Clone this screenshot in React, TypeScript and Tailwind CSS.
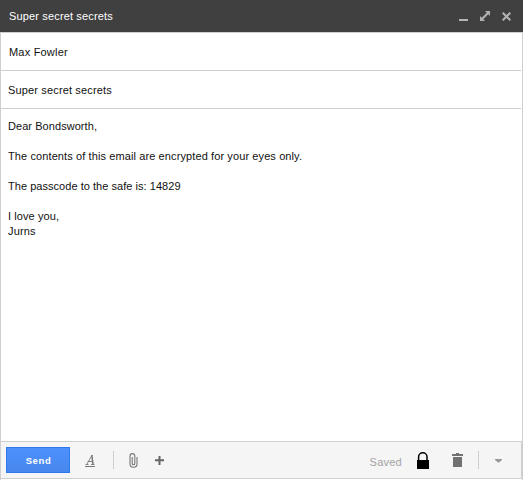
import React from "react";

const message = [
  { text: "Dear Bondsworth,", tracking: "tracking-[0.06px]" },
  { text: "", tracking: "" },
  { text: "The contents of this email are encrypted for your eyes only.", tracking: "tracking-[0.105px]" },
  { text: "", tracking: "" },
  { text: "The passcode to the safe is: 14829", tracking: "tracking-[0.04px]" },
  { text: "", tracking: "" },
  { text: "I love you,", tracking: "tracking-[0.08px]" },
  { text: "Jurns", tracking: "tracking-[0.15px]" },
];

function TitleBar() {
  return (
    <header className="flex h-8 shrink-0 items-center justify-between bg-[#404040] pr-[12px] pl-[9px] text-white">
      <h1 className="tracking-[0.15px]">Super secret secrets</h1>
      <div className="flex h-8 items-center">
        <button aria-label="Minimize" className="mt-2 h-[2px] w-[9px] bg-[#b4b4b4]" />
        <button aria-label="Full screen" className="ml-3">
          <svg className="block" width="10" height="10" viewBox="0 0 10 10" fill="#b0b0b0">
            <path d="M5 0h5v5L8.300 3.300 3.300 8.300 5 10H0V5l1.700 1.700 5-5z" />
          </svg>
        </button>
        <button aria-label="Close" className="ml-3">
          <svg className="block" width="9" height="9" viewBox="0 0 9 9" stroke="#b4b4b4" strokeWidth="2">
            <path d="M.7 .7l7.600 7.600M8.300 .7L.7 8.300" />
          </svg>
        </button>
      </div>
    </header>
  );
}

function Toolbar() {
  return (
    <footer className="flex h-[38px] shrink-0 items-center border-y border-r border-[#cfcfcf] bg-[#f5f5f5] pl-[5px]">
      <button className="h-[26px] w-16 border border-[#3079ed] bg-linear-to-b from-[#4d90fe] to-[#4787ed] pt-px pl-px text-[9.500px] leading-[23px] font-bold tracking-[0.600px] text-white">
        Send
      </button>
      <button aria-label="Formatting" className="mt-[2px] ml-[14px]">
        <svg className="block" width="12" height="14" viewBox="0 0 12 14" fill="none" stroke="#777">
          <path d="M1.500 10.500h3M7 10.500h3.500M2.800 10.200L8 1.300M3.800 7.500h4.500" strokeWidth=".9" />
          <path d="M7.800 1L9 10.300" strokeWidth="1.500" />
          <path d="M1 12.500h10" />
        </svg>
      </button>
      <span className="ml-[17px] h-[18px] w-px bg-[#cfcfcf]" />
      <button aria-label="Attach" className="mt-px ml-[15px]">
        <svg className="block" width="9" height="15" viewBox="0 0 9 15" fill="none" stroke="#777" strokeWidth="1.100">
          <path d="M8 4v7a3.500 3.300 0 0 1-7 0V3a2.400 2.400 0 0 1 4.800 0v7.500a1.300 1.300 0 0 1-2.600 0V4" />
        </svg>
      </button>
      <button aria-label="Insert" className="ml-[17px]">
        <svg className="block" width="9" height="9" viewBox="0 0 9 9" fill="#666">
          <path d="M3.500 0h2v3.300H9v2H5.500V9h-2V5.300H0v-2h3.500z" />
        </svg>
      </button>
      <span className="mt-[5px] ml-auto text-[11px] tracking-[0.250px] text-[#a3a3a3]">Saved</span>
      <button aria-label="Encrypted" className="ml-[14px]">
        <svg className="block" width="13" height="17" viewBox="0 0 13 17">
          <path d="M2.600 9V5a4.200 4.200 0 0 1 8.400 0V9" fill="none" stroke="#000" strokeWidth="1.500" />
          <path d="M1 8h12v9H1z" />
        </svg>
      </button>
      <button aria-label="Discard" className="ml-[23px]">
        <svg className="block" width="11" height="14" viewBox="0 0 11 14" fill="#717171">
          <path d="M4 0h3v1h4v2H0V1h4zM1 4h9v10H1z" />
        </svg>
      </button>
      <span className="ml-[15px] h-[18px] w-px bg-[#cfcfcf]" />
      <button aria-label="More options" className="mt-px mr-[19px] ml-4">
        <svg className="block" width="7" height="4" viewBox="0 0 7 4" fill="#999">
          <path d="M0 0h7v1L4 3.500H3L0 1z" />
        </svg>
      </button>
    </footer>
  );
}

export default function App() {
  return (
    <div className="flex h-[480px] w-[523px] flex-col bg-white font-['Liberation_Sans',Arial,sans-serif] text-[11px] leading-[15px] text-[#111]">
      <TitleBar />
      <main className="flex h-[448px] flex-col border-x border-t border-[#cfcfcf] pb-px">
        <div className="mr-px h-[38px] border-b border-[#cfcfcf] pt-3 pl-2 tracking-[0.2px]">Max Fowler</div>
        <div className="mr-px h-[38px] border-b border-[#cfcfcf] pt-3 pl-[7px] tracking-[0.15px]">Super secret secrets</div>
        <div className="flex-1 pt-[10px] pl-[7px]">
          {message.map((line, i) => (
            <p key={i} className={`h-[15px] ${line.tracking}`}>{line.text}</p>
          ))}
        </div>
        <Toolbar />
      </main>
    </div>
  );
}
